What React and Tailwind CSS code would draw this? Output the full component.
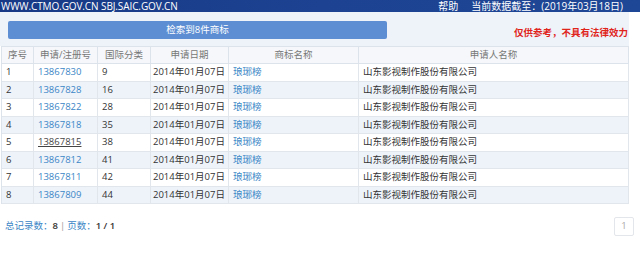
const rows = [
  ["1", "13867830", "9"],
  ["2", "13867828", "16"],
  ["3", "13867822", "28"],
  ["4", "13867818", "35"],
  ["5", "13867815", "38"],
  ["6", "13867812", "41"],
  ["7", "13867811", "42"],
  ["8", "13867809", "44"],
];

const cols = "grid grid-cols-[32px_64px_53px_78px_130px_1fr]";
const font = { fontFamily: "'Open Sans', 'Noto Sans CJK SC', sans-serif" };

export default function App() {
  return (
    <div className="w-[640px] h-[256px] bg-white overflow-hidden text-[9.5px]" style={font}>
      {/* top bar */}
      <div className="h-[12px] bg-gradient-to-r from-[#183a86] via-[#1c4291] to-[#1e4796] text-white flex items-center">
        <div className="w-[629px] flex justify-between text-[10px] leading-[12px]">
          <span className="pl-px tracking-[-0.1px]">WWW.CTMO.GOV.CN SBJ.SAIC.GOV.CN</span>
          <span className="pr-[6px]">
            <span className="mr-[13px]">帮助</span>当前数据截至：(2019年03月18日)
          </span>
        </div>
      </div>

      <div className="w-[629px]">
        {/* search summary */}
        <div className="h-[34px] bg-[#eef3fa] flex items-start">
          <div className="ml-[8px] mt-[9px] w-[379px] h-[18px] rounded-[2px] bg-[#5d8ed3] text-white flex items-center justify-center">
            检索到8件商标
          </div>
          <div className="ml-auto mt-[15px] pr-px text-[#e0241b] font-bold leading-[12px]">
            仅供参考，不具有法律效力
          </div>
        </div>

        {/* table */}
        <div className="ml-[1px] border-l border-[#dde3ea]">
          <div className={`${cols} h-[18px] bg-[#f5f7fa] text-[#777] border-y border-[#dde3ea]`}>
            {["序号", "申请/注册号", "国际分类", "申请日期", "商标名称", "申请人名称"].map((h) => (
              <div key={h} className="flex items-center justify-center border-r border-[#dde3ea]">
                {h}
              </div>
            ))}
          </div>
          {rows.map(([n, reg, cls], i) => (
            <div
              key={n}
              className={`${cols} h-[17.5px] text-[#333] border-b border-[#e1e6ec] ${i % 2 ? "bg-[#eef3fa]" : "bg-white"}`}
            >
              <div className="flex items-center pl-[4px] border-r border-[#e1e6ec]">{n}</div>
              <div className="flex items-center pl-[4px] border-r border-[#e1e6ec]">
                <span className={n === "5" ? "text-[#444] underline underline-offset-1" : "text-[#3b86c6]"}>{reg}</span>
              </div>
              <div className="flex items-center pl-[4px] border-r border-[#e1e6ec]">{cls}</div>
              <div className="flex items-center pl-[2px] border-r border-[#e1e6ec]">2014年01月07日</div>
              <div className="flex items-center pl-[4px] border-r border-[#e1e6ec] text-[#3b86c6]">琅琊榜</div>
              <div className="flex items-center pl-[4px] border-r border-[#e1e6ec]">山东影视制作股份有限公司</div>
            </div>
          ))}
        </div>
      </div>

      {/* footer */}
      <div className="w-[634px] flex items-center justify-between mt-[13px] pl-[5px]">
        <div>
          <span className="text-[#3b86c6]">总记录数：</span>
          <span className="font-semibold text-[#333]">8</span>
          <span className="text-[#999] mx-[2px]">|</span>
          <span className="text-[#3b86c6]">页数：</span>
          <span className="font-semibold text-[#333]">1 / 1</span>
        </div>
        <div className="w-[20px] h-[19px] border border-[#e3e6ea] rounded-[2px] text-[#aaa] flex items-center justify-center">
          1
        </div>
      </div>
    </div>
  );
}
